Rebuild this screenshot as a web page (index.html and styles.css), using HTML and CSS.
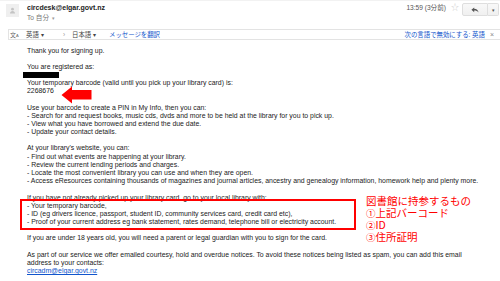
FILE: index.html
```html
<!DOCTYPE html>
<html lang="en">
<head>
    <meta charset="UTF-8">
    <title>circdesk@elgar.govt.nz</title>
    <link rel="stylesheet" href="styles.css">
</head>
<body>
    <div class="page">
        <div class="mail-head">
            <div class="avatar">
                <svg width="7" height="7" viewBox="0 0 7 7"><circle cx="3.5" cy="2.2" r="1.4" fill="#c4c4c4"/><path d="M1 6.5c0-1.6 1.1-2.6 2.5-2.6S6 4.9 6 6.5z" fill="#c4c4c4"/></svg>
            </div>
            <div class="from">
                <div class="sender">circdesk@elgar.govt.nz</div>
                <div class="to">To 自分 <span class="to-menu">▾</span></div>
            </div>
            <div class="meta">
                <span class="time">13:59 (3分前)</span>
                <span class="star">☆</span>
                <div class="reply-group">
                    <span class="reply">
                        <svg width="8" height="6" viewBox="0 0 8 6"><path d="M3.2 0.4 0.4 2.8 3.2 5.2V3.6C5 3.6 6.4 4.1 7.6 5.6 7.1 3.2 5.6 1.9 3.2 1.8z" fill="#555"/></svg>
                    </span>
                    <span class="more">▾</span>
                </div>
            </div>
        </div>

        <div class="translate-bar">
            <span class="tr-icon">文<small>A</small></span>
            <span class="lang">英語 ▾</span>
            <span class="tr-arrow">›</span>
            <span class="lang">日本語 ▾</span>
            <a class="tr-link" href="#">メッセージを翻訳</a>
            <a class="tr-link tr-off" href="#">次の言語で無効にする: 英語</a>
            <span class="tr-close">×</span>
        </div>

        <div class="message">
            <p>Thank you for signing up.</p>
            <p>You are registered as:<span class="redacted"></span>Your temporary barcode (valid until you pick up your library card) is:<br>2268676</p>
            <p>Use your barcode to create a PIN in My Info, then you can:<br>- Search for and request books, music cds, dvds and more to be held at the library for you to pick up.<br>- View what you have borrowed and extend the due date.<br>- Update your contact details.</p>
            <p>At your library's website, you can:<br>- Find out what events are happening at your library.<br>- Review the current lending periods and charges.<br>- Locate the most convenient library you can use and when they are open.<br>- Access eResources containing thousands of magazines and journal articles, ancestry and genealogy information, homework help and plenty more.</p>
            <p>If you have not already picked up your library card, go to your local library with:<br>- Your temporary barcode,<br>- ID (eg drivers licence, passport, student ID, community services card, credit card etc),<br>- Proof of your current address eg bank statement, rates demand, telephone bill or electricity account.</p>
            <p>If you are under 18 years old, you will need a parent or legal guardian with you to sign for the card.</p>
            <p>As part of our service we offer emailed courtesy, hold and overdue notices. To avoid these notices being listed as spam, you can add this email<br>address to your contacts:<br><a class="mail-link" href="#">circadm@elgar.govt.nz</a></p>
        </div>

        <svg class="red-arrow" width="31" height="18" viewBox="0 0 31 18">
            <polygon points="0.5,9 11,0.5 11,4 30.5,4 30.5,13.5 11,13.5 11,17.5" fill="#f00"/>
        </svg>
        <div class="red-box"></div>
        <div class="note">
            <div class="note-line">図書館に持参するもの</div>
            <div class="note-line"><span class="num">①</span>上記バーコード</div>
            <div class="note-line"><span class="num">②</span>ID</div>
            <div class="note-line"><span class="num">③</span>住所証明</div>
        </div>
    </div>
</body>
</html>
```

FILE: styles.css
```css
body {
    margin: 0;
    background-color: #fff;
    color: #222;
    font-family: "Liberation Sans", Arial, "Noto Sans CJK JP", sans-serif;
}
.page {
    position: relative;
    width: 500px;
    height: 281px;
    overflow: hidden;
}

/* header */
.mail-head {
    display: flex;
    align-items: flex-start;
    height: 29px;
    padding-top: 3px;
    box-sizing: border-box;
    border-top: 1px solid #f2f2f2;
}
.avatar {
    width: 13px;
    height: 13px;
    margin: 0 8px 0 6px;
    background-color: #efefef;
    display: flex;
    align-items: center;
    justify-content: center;
}
.sender {
    font-size: 7px;
    line-height: 8px;
    font-weight: bold;
    color: #222;
}
.to {
    margin-top: 2px;
    font-size: 6.6px;
    line-height: 8px;
    color: #777;
}
.to-menu {
    font-size: 5px;
    color: #999;
    margin-left: 1px;
}
.meta {
    margin-left: auto;
    display: flex;
    align-items: flex-start;
}
.time {
    font-size: 6.6px;
    line-height: 8px;
    color: #555;
}
.star {
    margin-left: 5px;
    font-size: 8px;
    line-height: 8px;
    color: #cfcfcf;
}
.reply-group {
    display: flex;
    margin: -1px 1px 0 3px;
    height: 13px;
}
.reply,
.more {
    display: flex;
    align-items: center;
    justify-content: center;
    border: 1px solid #dedede;
    background: linear-gradient(#f8f8f8, #f0f0f0);
    box-sizing: border-box;
}
.reply {
    width: 26px;
    border-radius: 2px 0 0 2px;
}
.more {
    width: 11px;
    border-left: none;
    border-radius: 0 2px 2px 0;
    font-size: 5px;
    color: #555;
}

/* translation bar */
.translate-bar {
    display: flex;
    align-items: center;
    height: 11px;
    margin-left: 8px;
    box-sizing: border-box;
    border: 1px solid #e3e3e3;
    border-right: none;
    font-size: 6.4px;
    color: #444;
}
.tr-icon {
    width: 16px;
    margin-left: 1px;
    font-size: 6px;
    color: #666;
}
.tr-icon small {
    font-size: 4px;
}
.lang {
    width: 37px;
}
.tr-arrow {
    width: 9px;
    color: #999;
}
.tr-link {
    color: #15c;
    text-decoration: none;
}
.tr-off {
    margin-left: auto;
}
.tr-close {
    margin: 0 6px 0 5px;
    color: #888;
    font-size: 7px;
}

/* message body */
.message {
    padding: 6.5px 0 0 27px;
    font-size: 6.9px;
    line-height: 8.25px;
    white-space: nowrap;
}
.message p {
    margin: 0 0 7.9px;
}
.redacted {
    display: block;
    width: 36px;
    height: 5.7px;
    margin: 1.6px 0 0.95px -4px;
    background-color: #000;
}
.mail-link {
    color: #15c;
}

/* red annotations drawn over the mail */
.red-arrow {
    position: absolute;
    left: 61px;
    top: 86px;
}
.red-box {
    position: absolute;
    left: 20px;
    top: 199px;
    width: 336px;
    height: 31px;
    box-sizing: border-box;
    border: 2.5px solid #f00;
}
.note {
    position: absolute;
    left: 366px;
    top: 194.5px;
    font-family: "Noto Sans CJK JP", sans-serif;
    font-size: 10.5px;
    color: #f00;
    white-space: nowrap;
}
.note-line {
    height: 12px;
    line-height: 12px;
}
.note .num {
    font-size: 9.5px;
}
```
